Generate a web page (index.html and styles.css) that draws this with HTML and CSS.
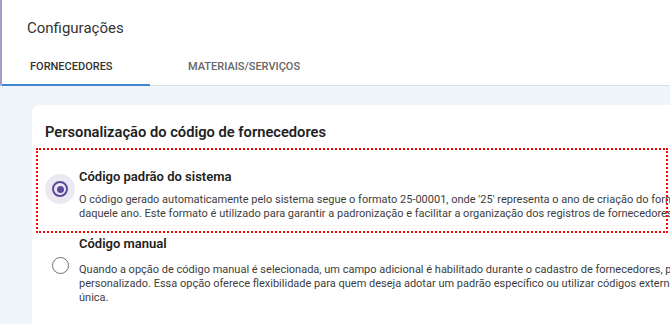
FILE: index.html
```html
<!DOCTYPE html>
<html lang="pt-BR">
<head>
    <meta charset="UTF-8">
    <meta name="viewport" content="width=device-width, initial-scale=1.0">
    <title>Configurações</title>
    <link rel="stylesheet" href="styles.css">
</head>
<body>
    <div class="header">
        <h1 class="pageTitle">Configurações</h1>
        <div class="tabs">
            <div class="tab active">Fornecedores</div>
            <div class="tab">Materiais/Serviços</div>
        </div>
    </div>

    <div class="content">
        <div class="card">
            <h2 class="cardTitle">Personalização do código de fornecedores</h2>

            <div class="option selected">
                <div class="radioWrap">
                    <span class="radio"></span>
                </div>
                <div class="optionText">
                    <div class="optionTitle">Código padrão do sistema</div>
                    <p class="optionDesc">O código gerado automaticamente pelo sistema segue o formato 25-00001, onde '25' representa o ano de criação do fornecedor e '00001' o número sequencial<br>daquele ano. Este formato é utilizado para garantir a padronização e facilitar a organização dos registros de fornecedores.</p>
                </div>
            </div>

            <div class="option">
                <div class="radioWrap">
                    <span class="radio"></span>
                </div>
                <div class="optionText">
                    <div class="optionTitle">Código manual</div>
                    <p class="optionDesc">Quando a opção de código manual é selecionada, um campo adicional é habilitado durante o cadastro de fornecedores, permitindo informar um código<br>personalizado. Essa opção oferece flexibilidade para quem deseja adotar um padrão específico ou utilizar códigos externos como referência<br>única.</p>
                </div>
            </div>
        </div>
    </div>
</body>
</html>
```

FILE: styles.css
```css
html, body {
    margin: 0;
    height: 100%;
    overflow: hidden;
}

body {
    font-family: Roboto, 'Liberation Sans', sans-serif;
    background-color: #f0f5fa;
    color: #333;
}

.header {
    background-color: #fff;
    border-left: 2px solid #a89cc8;
    border-bottom: 1px solid #dcdfe4;
    height: 85px;
    display: flex;
    flex-direction: column;
    justify-content: space-between;
}

.pageTitle {
    margin: 0;
    padding: 19px 0 0 25px;
    font-size: 15px;
    font-weight: 400;
    color: #333;
}

.tabs {
    display: flex;
}

.tab {
    text-transform: uppercase;
    font-size: 11px;
    font-weight: 500;
    color: #666;
    padding: 0 0 11px 28px;
    width: 120px;
    border-bottom: 2px solid transparent;
    margin-bottom: -1px;
}

.tab.active {
    color: #333;
    border-bottom-color: #3f86d1;
}

.tab + .tab {
    padding-left: 38px;
}

.content {
    padding: 19px 0 0 32px;
}

.card {
    background-color: #fff;
    border-radius: 8px;
    width: 900px;
    height: 260px;
    padding: 18px 0 0 13px;
    box-sizing: border-box;
}

.cardTitle {
    margin: 0 0 9px 0;
    font-size: 14.7px;
    font-weight: 600;
    color: #222;
}

.option {
    display: flex;
    align-items: flex-start;
    width: 628px;
    margin-left: -7px;
    margin-top: 5px;
    white-space: nowrap;
}

.option.selected {
    outline: 2px dotted #f00;
    padding: 19px 0 10px 0;
    margin-top: 0;
}

.radioWrap {
    width: 30px;
    height: 30px;
    border-radius: 50%;
    margin: 14px 4px 0 7px;
    display: flex;
    align-items: center;
    justify-content: center;
    flex-shrink: 0;
}

.selected .radioWrap {
    margin-top: 5px;
    background-color: #ebe8f2;
}

.radio {
    width: 17px;
    height: 17px;
    border: 1.5px solid #6f6f6f;
    border-radius: 50%;
    box-sizing: border-box;
    position: relative;
}

.selected .radio {
    width: 16px;
    height: 16px;
    border: 2px solid #5a4b9c;
}

.selected .radio::after {
    content: '';
    position: absolute;
    top: 2.5px;
    left: 2.5px;
    width: 7px;
    height: 7px;
    border-radius: 50%;
    background-color: #5a4b9c;
}

.optionTitle {
    font-size: 13px;
    line-height: 15px;
    font-weight: 600;
    color: #222;
    margin-bottom: 12px;
}

.selected .optionTitle {
    margin-bottom: 9px;
}

.optionDesc {
    margin: 0;
    font-size: 11px;
    line-height: 14px;
    color: #3d3d3d;
}
```
